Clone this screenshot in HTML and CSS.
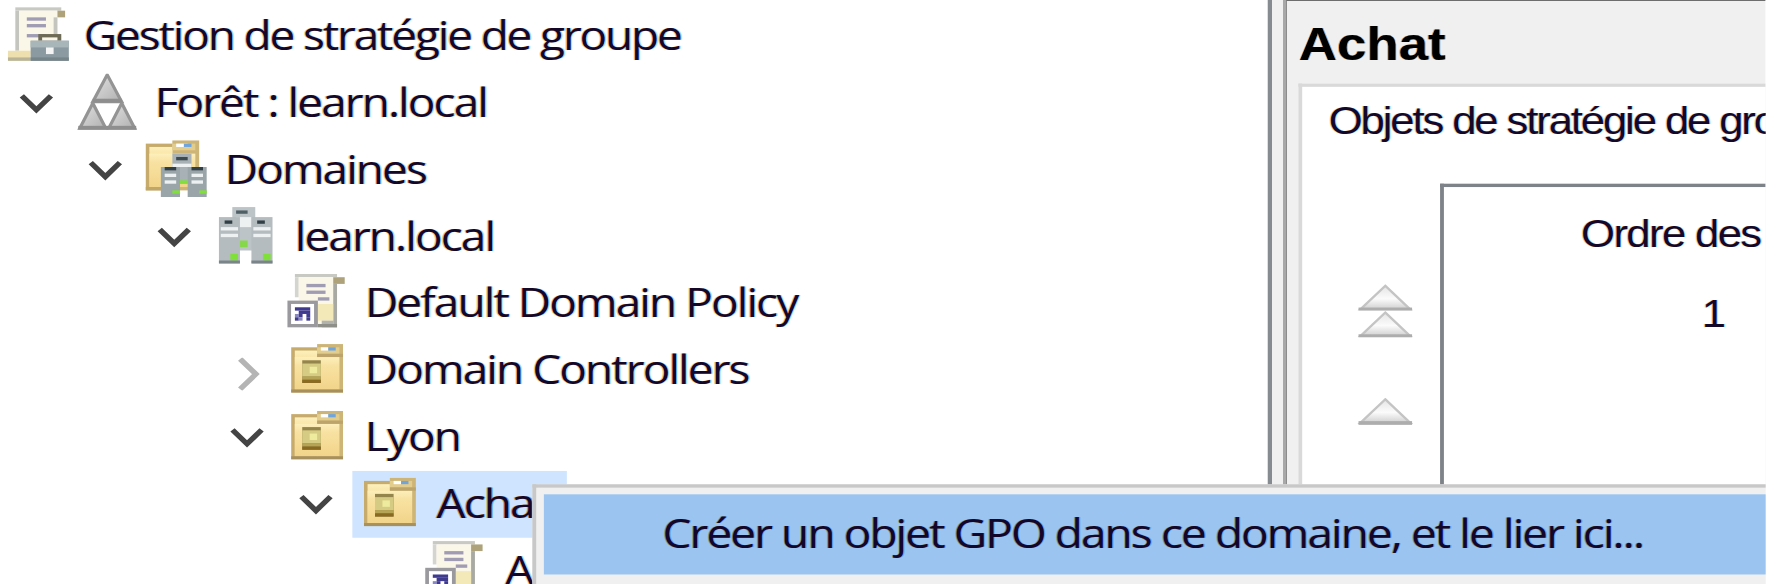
FILE: index.html
```
<!DOCTYPE html>
<html lang="fr">
<head>
<meta charset="utf-8">
<title>Gestion de stratégie de groupe</title>
<link rel="stylesheet" href="styles.css">
</head>
<body>
<svg class="defs" aria-hidden="true">
  <defs>
    <linearGradient id="folderFill" x1="0" y1="0" x2="0" y2="1"><stop offset="0" stop-color="#fdf0bb"/><stop offset=".25" stop-color="#f8e2a2"/><stop offset="1" stop-color="#f2d48a"/></linearGradient>
    <linearGradient id="triFill" x1="0" y1="0" x2="1" y2="1"><stop offset="0" stop-color="#e2e2e2"/><stop offset="1" stop-color="#b0b0b0"/></linearGradient>
    <linearGradient id="arrowFill" x1="0" y1="0" x2="0" y2="1"><stop offset="0" stop-color="#e4e4e4"/><stop offset=".55" stop-color="#fbfbfb"/><stop offset="1" stop-color="#cfcfcf"/></linearGradient>
    <symbol id="folder" viewBox="0 0 14 15">
      <rect x="0" y="1" width="7" height="14" fill="#c6ab6c"/>
      <rect x="7" y="0" width="7" height="15" fill="#cdb477"/>
      <rect x="1" y="2" width="6" height="12" fill="url(#folderFill)"/>
      <rect x="1" y="4" width="12" height="10" fill="url(#folderFill)"/>
      <rect x="7" y="1" width="6" height="2" fill="#e3cd8c"/>
      <rect x="8" y="1" width="2" height="1" fill="#ffffff"/>
      <rect x="10" y="1" width="2" height="1" fill="#6fa5dc"/>
      <rect x="7" y="3" width="7" height="1" fill="#bda46a"/>
      <rect x="0" y="14" width="14" height="1" fill="#a8905c"/>
      <rect x="3" y="5" width="5" height="7" fill="#94854c"/>
      <rect x="3" y="6" width="5" height="4" fill="#d6cb82"/>
      <rect x="5" y="7" width="2" height="2" fill="#eeea9e"/>
      <rect x="3" y="10" width="5" height="1" fill="#b5a455"/>
      <rect x="3" y="11" width="5" height="1" fill="#8a6a20"/>
    </symbol>
    <symbol id="scroll" viewBox="0 0 16 16">
      <rect x="2" y="0" width="12" height="1" fill="#c9c9c4"/>
      <rect x="2" y="1" width="1" height="12" fill="#c5c5c0"/>
      <rect x="3" y="1" width="10" height="13" fill="#fbf7e8"/>
      <rect x="13" y="1" width="2" height="2" fill="#ada27a"/>
      <rect x="12" y="3" width="1" height="10" fill="#c5c5c0"/>
      <rect x="5" y="3" width="5" height="1" fill="#a09cb4"/>
      <rect x="5" y="5" width="5" height="1" fill="#a09cb4"/>
      <rect x="5" y="8" width="5" height="1" fill="#a09cb4"/>
      <rect x="0" y="13" width="6" height="3" fill="#eee0ae"/>
      <rect x="0" y="15" width="6" height="1" fill="#b9b498"/>
      <rect x="8" y="8" width="6" height="2" fill="#6d6a55"/>
      <rect x="9" y="9" width="4" height="1" fill="#fbf7e8"/>
      <rect x="6" y="10" width="10" height="6" fill="#8b9aa0"/>
      <rect x="6" y="10" width="10" height="2" fill="#a9b6b9"/>
      <rect x="10" y="12" width="2" height="2" fill="#f4f4f4"/>
      <rect x="6" y="15" width="10" height="1" fill="#76858a"/>
    </symbol>
    <symbol id="forest" viewBox="0 0 16 18">
      <polygon points="8,0.4 12,9 4,9" fill="url(#triFill)" stroke="#949494" stroke-width=".9"/>
      <polygon points="4,9.4 7.6,17.4 .4,17.4" fill="url(#triFill)" stroke="#949494" stroke-width=".9"/>
      <polygon points="12,9.4 15.6,17.4 8.4,17.4" fill="url(#triFill)" stroke="#949494" stroke-width=".9"/>
      <rect x="4" y="8" width="8" height="1.2" fill="#8e8e8e"/>
      <rect x="0" y="16.6" width="16" height="1.2" fill="#8e8e8e"/>
    </symbol>
    <symbol id="servers" viewBox="0 0 14 17">
      <rect x="3.5" y="0" width="6" height="13" fill="#bcc4c7"/>
      <rect x="4.5" y="1" width="3" height="1" fill="#4e5f66"/>
      <rect x="4.5" y="3" width="4" height="3" fill="#eef1f2"/>
      <rect x="5.5" y="10" width="2" height="2" fill="#86d84a"/>
      <rect x="0" y="3" width="5.5" height="14" fill="#b4bcbf"/>
      <rect x="1.5" y="4" width="2" height="1" fill="#2f3f45"/>
      <rect x="0.5" y="6" width="4.5" height="1" fill="#eef1f2"/>
      <rect x="0.5" y="8" width="4.5" height="1" fill="#eef1f2"/>
      <rect x="3" y="14" width="2" height="2" fill="#7fe038"/>
      <rect x="0" y="16" width="5.5" height="1" fill="#7b8589"/>
      <rect x="8.5" y="3" width="5.5" height="14" fill="#b4bcbf"/>
      <rect x="10" y="4" width="2" height="1" fill="#2f3f45"/>
      <rect x="9" y="6" width="4.5" height="1" fill="#eef1f2"/>
      <rect x="9" y="8" width="4.5" height="1" fill="#eef1f2"/>
      <rect x="11.5" y="14" width="2" height="2" fill="#7fe038"/>
      <rect x="8.5" y="16" width="5.5" height="1" fill="#7b8589"/>
    </symbol>
    <symbol id="shortcutscroll" viewBox="0 0 16 17">
      <rect x="2" y="0" width="11" height="1" fill="#c9c9c4"/>
      <rect x="2" y="1" width="1" height="6" fill="#d5d5d0"/>
      <rect x="3" y="1" width="9" height="14" fill="#fbf7e8"/>
      <rect x="12" y="1" width="3" height="2" fill="#ada27a"/>
      <rect x="12" y="3" width="1" height="13" fill="#a9a9a4"/>
      <rect x="5" y="3" width="5" height="1" fill="#a09cb4"/>
      <rect x="5" y="5" width="5" height="1" fill="#a09cb4"/>
      <rect x="8" y="7" width="3" height="1" fill="#a09cb4"/>
      <rect x="8" y="9" width="4" height="5" fill="#f3e8b8"/>
      <rect x="9" y="14" width="3" height="2" fill="#b3b3ae"/>
      <rect x="8" y="15" width="5" height="1" fill="#8f8f8a"/>
      <rect x="0" y="8" width="8" height="8" fill="#9a9a9e"/>
      <rect x="1" y="9" width="6" height="6" fill="#ffffff"/>
      <rect x="2" y="10" width="4" height="1" fill="#3f3a8e"/>
      <rect x="3" y="11" width="3" height="1" fill="#3f3a8e"/>
      <rect x="2" y="12" width="1" height="1" fill="#8a88c0"/>
      <rect x="3" y="12" width="1" height="1" fill="#3f3a8e"/>
      <rect x="5" y="12" width="1" height="1" fill="#3f3a8e"/>
      <rect x="2" y="13" width="1" height="1" fill="#3f3a8e"/>
      <rect x="3" y="13" width="1" height="1" fill="#8a88c0"/>
      <rect x="5" y="13" width="1" height="1" fill="#3f3a8e"/>
    </symbol>
    <symbol id="folderservers" viewBox="0 0 16 17">
      <rect x="0" y="1" width="7" height="14" fill="#c6ab6c"/>
      <rect x="7" y="0" width="7" height="15" fill="#cdb477"/>
      <rect x="1" y="2" width="6" height="12" fill="url(#folderFill)"/>
      <rect x="1" y="4" width="12" height="10" fill="url(#folderFill)"/>
      <rect x="7" y="1" width="6" height="2" fill="#e3cd8c"/>
      <rect x="8" y="1" width="3" height="1" fill="#ffffff"/>
      <rect x="10" y="1" width="2" height="1" fill="#6fa5dc"/>
      <rect x="0" y="14" width="9" height="1" fill="#c0a768"/>
      <rect x="7" y="4" width="5" height="9" fill="#a8b2b6"/>
      <rect x="8" y="5" width="3" height="1" fill="#3b4b50"/>
      <rect x="7" y="7" width="5" height="1" fill="#eef1f2"/>
      <rect x="4" y="8" width="5" height="9" fill="#9aa5a9"/>
      <rect x="5" y="8" width="3" height="1" fill="#2f3f45"/>
      <rect x="5" y="10" width="3" height="1" fill="#eef1f2"/>
      <rect x="5" y="12" width="3" height="1" fill="#eef1f2"/>
      <rect x="7" y="15" width="2" height="1" fill="#7fe038"/>
      <rect x="11" y="8" width="5" height="9" fill="#9aa5a9"/>
      <rect x="12" y="8" width="3" height="1" fill="#2f3f45"/>
      <rect x="12" y="10" width="3" height="1" fill="#eef1f2"/>
      <rect x="12" y="12" width="3" height="1" fill="#eef1f2"/>
      <rect x="14" y="15" width="2" height="1" fill="#7fe038"/>
      <rect x="9" y="12" width="2" height="1" fill="#7fe038"/>
    </symbol>
    <symbol id="down" viewBox="0 0 9 7"><polyline points="0.7,0.7 4.5,4.9 8.3,0.7" fill="none" stroke="#444" stroke-width="1.5"/></symbol>
    <symbol id="right" viewBox="0 0 6 10"><polyline points="0.7,0.5 4.8,5 0.7,9.5" fill="none" stroke="#b4b4b4" stroke-width="1.5"/></symbol>
    <symbol id="up" viewBox="0 0 16 9">
      <polygon points="8,0.6 15,8.2 1,8.2" fill="url(#arrowFill)" stroke="#c4c4c4" stroke-width=".7"/>
      <rect x="0.5" y="7.6" width="15" height="1.2" fill="#adadad"/>
    </symbol>
  </defs>
</svg>

<div class="screen">
  <nav class="tree">
    <div class="row"><svg class="icon root"><use href="#scroll"/></svg><span class="label wide">Gestion de stratégie de groupe</span></div>
    <div class="row l0"><span class="twist"><svg class="chev"><use href="#down"/></svg></span><svg class="icon"><use href="#forest"/></svg><span class="label">Forêt : learn.local</span></div>
    <div class="row l1"><span class="twist"><svg class="chev"><use href="#down"/></svg></span><svg class="icon"><use href="#folderservers"/></svg><span class="label">Domaines</span></div>
    <div class="row l2"><span class="twist"><svg class="chev"><use href="#down"/></svg></span><svg class="icon srv"><use href="#servers"/></svg><span class="label">learn.local</span></div>
    <div class="row l3"><span class="twist"></span><svg class="icon"><use href="#shortcutscroll"/></svg><span class="label">Default Domain Policy</span></div>
    <div class="row l3"><span class="twist"><svg class="chev closed"><use href="#right"/></svg></span><svg class="icon fold"><use href="#folder"/></svg><span class="label">Domain Controllers</span></div>
    <div class="row l3"><span class="twist"><svg class="chev"><use href="#down"/></svg></span><svg class="icon fold"><use href="#folder"/></svg><span class="label">Lyon</span></div>
    <div class="row l4"><span class="twist"><svg class="chev"><use href="#down"/></svg></span><span class="selected"><svg class="icon fold"><use href="#folder"/></svg><span class="label">Achat</span></span></div>
    <div class="row l5"><span class="twist"></span><svg class="icon"><use href="#shortcutscroll"/></svg><span class="label">Achat</span></div>
  </nav>
  <div class="splitter"></div>
  <section class="details">
    <h1 class="title">Achat</h1>
    <div class="panel">
      <p class="caption">Objets de stratégie de groupe liés</p>
      <div class="links">
        <div class="arrows">
          <svg class="arrow double"><use href="#up"/></svg>
          <svg class="arrow double"><use href="#up"/></svg>
          <svg class="arrow single"><use href="#up"/></svg>
        </div>
        <div class="table">
          <div class="th">Ordre des liens</div>
          <div class="td">1</div>
        </div>
      </div>
    </div>
  </section>
  <div class="menu">
    <div class="menu-item">Créer un objet GPO dans ce domaine, et le lier ici...</div>
  </div>
</div>
</body>
</html>
```

FILE: styles.css
```
html, body {
  margin: 0;
  height: 100%;
  overflow: hidden;
  background: #fff;
}
.defs { position: absolute; width: 0; height: 0; }

.screen {
  width: 461.1px;
  height: 175px;
  display: flex;
  position: relative;
  overflow: hidden;
  transform: scale(3.83, 3.34);
  transform-origin: 0 0;
  font-family: "Open Sans", "Noto Sans", sans-serif;
  font-size: 12px;
  color: #14082a;
}

.tree { width: 330.5px; flex: none; padding-top: 0.7px; background: #fff; }
.row { display: flex; align-items: center; height: 20px; padding-left: 1.6px; white-space: nowrap; }
.l0 { padding-left: 1.6px; }
.l1 { padding-left: 19.9px; }
.l2 { padding-left: 38.2px; }
.l3 { padding-left: 56.5px; }
.l4 { padding-left: 74.8px; }
.l5 { padding-left: 93.1px; }

.twist { width: 18.4px; flex: none; display: flex; align-items: center; }
.chev { width: 9px; height: 7px; margin-left: 3.1px; margin-top: 2px; }
.chev.closed { width: 6px; height: 10px; margin-left: 5.5px; margin-top: 2px; }

.icon { width: 16px; height: 17px; flex: none; margin-right: 4.4px; }
.icon.root { height: 16.4px; margin-right: 4.3px; }
.icon.srv { width: 14.3px; margin-right: 5.4px; margin-left: .7px; }
.icon.fold { width: 13.6px; height: 14.6px; margin-left: 1.4px; margin-right: 5.4px; }

.label { letter-spacing: -0.5px; text-shadow: -0.28px 0 #f4c27c, 0.3px 0 #a5d8ff; }
.label.wide { letter-spacing: -0.56px; }

.selected {
  display: flex;
  align-items: center;
  height: 20px;
  width: 56.2px;
  flex: none;
  background: #cfe4fe;
  margin-left: -1.1px;
  padding-left: 1.5px;
  box-sizing: border-box;
}
.selected .label { text-shadow: -0.25px 0 #c79a5a, 0.3px 0 #6fa8e8; }

.splitter {
  width: 5.74px;
  flex: none;
  background: linear-gradient(to right,
    #868a91 1.04px, #f0f0f0 1.04px,
    #f0f0f0 3.94px, #a8a8a8 3.94px,
    #a8a8a8 4.7px, #6d6d6d 4.7px);
}
.details {
  flex: 1;
  background: linear-gradient(#6d6d6d 0.3px, #f0f0f0 0.3px);
  padding-left: 2.9px;
  display: flex;
  flex-direction: column;
  min-width: 0;
}
.title {
  margin: 0;
  height: 24.85px;
  flex: none;
  line-height: 27.4px;
  font-family: "Liberation Sans", sans-serif;
  font-size: 13.8px;
  font-weight: 700;
  color: #000;
  text-shadow: -0.25px 0 #e7a65e, 0.25px 0 #7fb5ee;
}
.panel {
  flex: 1;
  background: #fff;
  border-left: 1px solid #d9d9d9;
  border-top: 1px solid #d9d9d9;
  padding-left: 6.8px;
}
.caption {
  margin: 0;
  padding-top: 4.5px;
  line-height: 13px;
  font-family: "Liberation Sans", sans-serif;
  font-size: 11.4px;
  white-space: nowrap;
  letter-spacing: -0.55px;
  text-shadow: -0.25px 0 #f0c78e, 0.25px 0 #a8dcff;
}
.links { display: flex; margin-top: 11.45px; margin-left: -6.8px; height: 100px; }
.arrows { width: 35.8px; padding-top: 29.9px; padding-left: 13.6px; box-sizing: border-box; flex: none; }
.arrow { display: block; width: 15.4px; height: 8.4px; }
.arrow.single { margin-top: 17.7px; }
.table {
  flex: 1;
  border-left: 1px solid #7e838a;
  border-top: 1px solid #7e838a;
  font-family: "Liberation Sans", sans-serif;
  font-size: 11.4px;
  white-space: nowrap;
  padding-left: 35.9px;
  overflow: hidden;
  letter-spacing: -0.42px;
  text-shadow: -0.25px 0 #f0c78e, 0.25px 0 #a8dcff;
}
.th { padding-top: 8.65px; line-height: 13px; }
.td { padding-top: 10.35px; padding-left: 31.5px; line-height: 13px; }

.menu {
  position: absolute;
  left: 138.9px;
  top: 144.6px;
  width: 340px;
  height: 40px;
  background: #f0f0f0;
  border-left: 1px solid #c8c8c8;
  border-top: 1px solid #c8c8c8;
  padding: 2.6px 0 0 2.1px;
  box-sizing: border-box;
}
.menu-item {
  height: 24.15px;
  line-height: 24.15px;
  background: #9bc5f0;
  padding-left: 31px;
  white-space: nowrap;
  letter-spacing: -0.5px;
  color: #12062a;
  text-shadow: -0.25px 0 #7c8f7c, 0.3px 0 #6da8ee;
}
```
